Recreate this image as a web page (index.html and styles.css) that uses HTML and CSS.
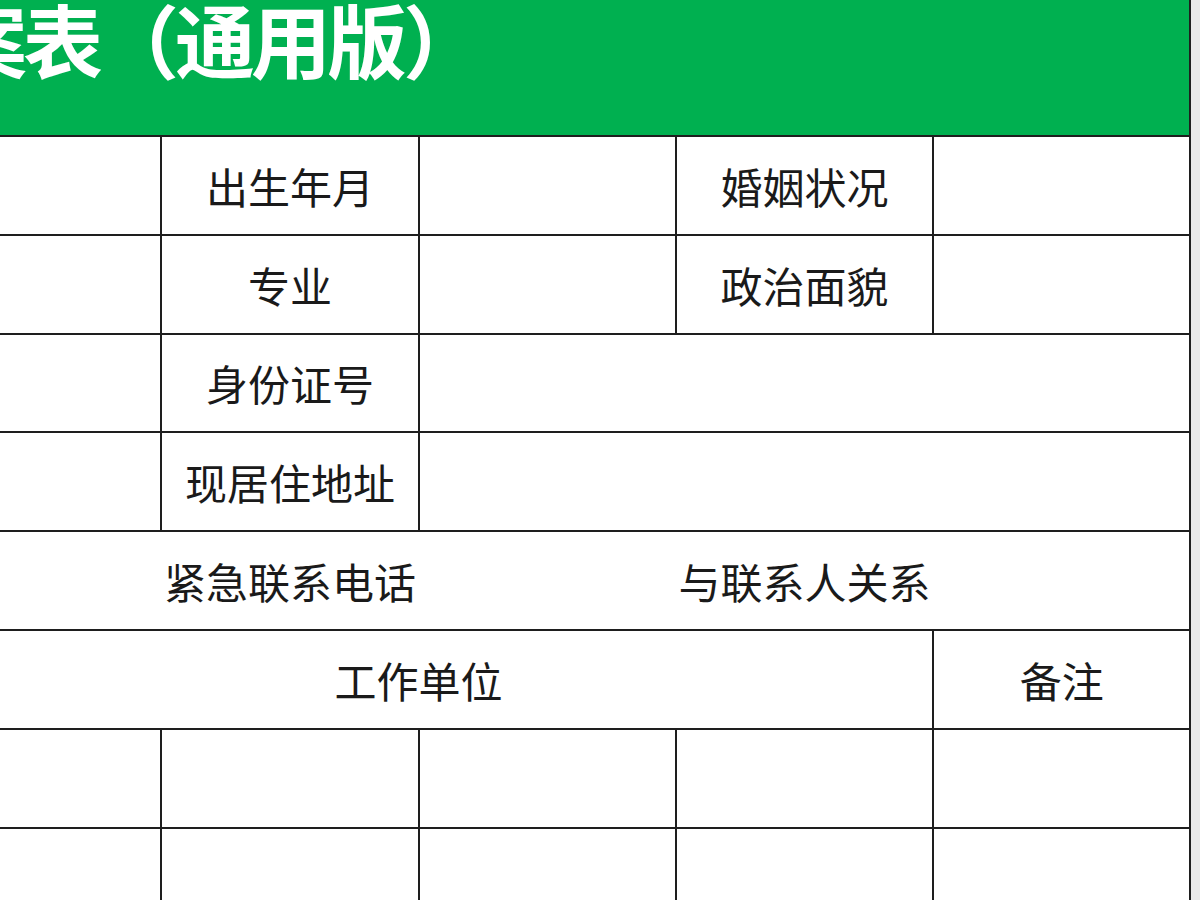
FILE: index.html
```html
<!DOCTYPE html>
<html lang="zh-CN">
<head>
<meta charset="utf-8">
<title>员工档案表（通用版）</title>
<link rel="stylesheet" href="styles.css">
</head>
<body>
<div class="sheet">
  <div class="title-bar"><h1 class="title">员工档案表（通用版）</h1></div>

  <div class="cell"></div>
  <div class="cell">出生年月</div>
  <div class="cell"></div>
  <div class="cell">婚姻状况</div>
  <div class="cell"></div>

  <div class="cell"></div>
  <div class="cell">专业</div>
  <div class="cell"></div>
  <div class="cell">政治面貌</div>
  <div class="cell"></div>

  <div class="cell"></div>
  <div class="cell">身份证号</div>
  <div class="cell span-3"></div>

  <div class="cell"></div>
  <div class="cell">现居住地址</div>
  <div class="cell span-3"></div>

  <div class="cell span-5 merged-row">
    <div class="merged-text span-3">紧急联系电话</div>
    <div class="merged-text">与联系人关系</div>
    <div class="merged-text"></div>
  </div>

  <div class="cell span-4">工作单位</div>
  <div class="cell">备注</div>

  <div class="cell"></div>
  <div class="cell"></div>
  <div class="cell"></div>
  <div class="cell"></div>
  <div class="cell"></div>

  <div class="cell"></div>
  <div class="cell"></div>
  <div class="cell"></div>
  <div class="cell"></div>
  <div class="cell"></div>
</div>
</body>
</html>
```

FILE: styles.css
```css
html, body {
  margin: 0;
  padding: 0;
  height: 100%;
}

body {
  background: #e8e8e8;
  overflow: hidden;
  font-family: "Noto Sans CJK SC", "Noto Sans", sans-serif;
}

.sheet {
  display: grid;
  grid-template-columns: repeat(5, 255.3px);
  grid-template-rows: 135px repeat(8, 96.8px);
  gap: 2px;
  padding-right: 2px;
  width: max-content;
  margin-left: -95px;
  background: #1e1e1e;
}

.title-bar {
  grid-column: 1 / span 5;
  background: #00b050;
  overflow: hidden;
}

.title {
  margin: 0;
  font-size: 80px;
  line-height: 75px;
  font-weight: 700;
  letter-spacing: -4px;
  color: #ffffff;
  white-space: nowrap;
  text-indent: -186px;
}

.cell {
  background: #ffffff;
  display: flex;
  align-items: center;
  justify-content: center;
  font-size: 42px;
  color: #1a1a1a;
  white-space: nowrap;
}

.span-3 { grid-column: span 3; }
.span-4 { grid-column: span 4; }
.span-5 { grid-column: span 5; }

.merged-row {
  display: grid;
  grid-template-columns: repeat(5, 255.3px);
  gap: 2px;
  align-items: center;
}

.merged-text {
  text-align: center;
}
```
